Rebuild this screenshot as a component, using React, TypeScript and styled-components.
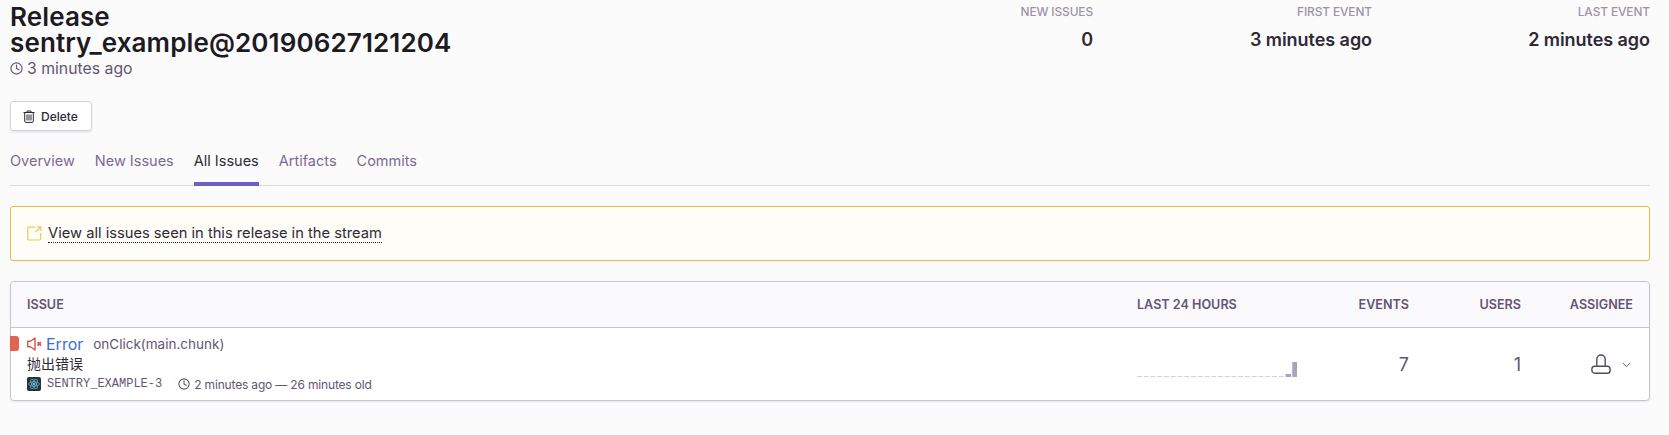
import styled, { createGlobalStyle } from "styled-components";

const GlobalStyle = createGlobalStyle`
  html, body {
    margin: 0;
    padding: 0;
    background: #fbfbfc;
  }

  body {
    font-family: Inter, "Noto Sans CJK SC", sans-serif;
    color: #2f2936;
  }
`;

const Page = styled.div`
  height: 435px;
  overflow: hidden;
  padding: 4px 19px 0 10px;
  box-sizing: border-box;
`;

const Header = styled.div`
  display: grid;
  grid-template-columns: 1fr 278px 279px 278px;
`;

const Title = styled.h1`
  margin: 0;
  font-size: 26px;
  line-height: 26px;
  font-weight: 600;
  letter-spacing: 0.12px;
  color: #1d1a22;
`;

const Since = styled.div`
  display: flex;
  align-items: center;
  gap: 4px;
  margin-top: 1px;
  height: 22px;
  font-size: 15.8px;
  color: #645574;
`;

const Stat = styled.div`
  text-align: right;
`;

const StatLabel = styled.div`
  margin-top: 1px;
  font-size: 11.9px;
  line-height: 14px;
  font-weight: 500;
  letter-spacing: -0.1px;
  color: #9d93a8;
`;

const StatValue = styled.div`
  margin-top: 11px;
  font-size: 18px;
  line-height: 20px;
  font-weight: 600;
  letter-spacing: -0.05px;
  color: #2f2936;
`;

const DeleteButton = styled.button`
  display: flex;
  align-items: center;
  gap: 6px;
  width: 82px;
  height: 30px;
  margin-top: 22px;
  padding: 0 0 0 12px;
  box-sizing: border-box;
  background: #fff;
  border: 1px solid #d5d0db;
  border-radius: 3px;
  box-shadow: 0 2px 2px rgba(47, 41, 54, 0.08);
  font-family: inherit;
  font-size: 12px;
  font-weight: 500;
  color: #2f2936;
`;

const Tabs = styled.div`
  display: flex;
  gap: 20px;
  height: 55px;
  box-sizing: border-box;
  border-bottom: 1px solid #dcd8e0;
`;

const Tab = styled.div<{ $active?: boolean }>`
  height: 55px;
  box-sizing: border-box;
  padding-top: 21px;
  font-size: 14.5px;
  line-height: 18px;
  color: ${(p) => (p.$active ? "#2f2936" : "#7c6a8e")};
  border-bottom: ${(p) => (p.$active ? "4px solid #6c5fc7" : "none")};
`;

const Alert = styled.div`
  display: flex;
  align-items: center;
  gap: 6px;
  height: 55px;
  margin-top: 20px;
  padding-left: 16px;
  box-sizing: border-box;
  background: #fffdf7;
  border: 1px solid #e4bd4c;
  border-radius: 3px;
  box-shadow: 0 1px 1px rgba(47, 41, 54, 0.06);
`;

const AlertLink = styled.span`
  font-size: 14.7px;
  line-height: 18px;
  color: #2f2936;
  border-bottom: 1px dotted #2f2936;
`;

const Table = styled.div`
  margin-top: 20px;
  background: #fff;
  border: 1px solid #c9c3d1;
  border-radius: 4px;
  box-shadow: 0 1px 2px rgba(47, 41, 54, 0.1);
`;

const Columns = styled.div`
  display: grid;
  grid-template-columns: 1fr 160px 112px 112px 112px;
  padding-right: 16px;
`;

const HeadRow = styled(Columns)`
  height: 45px;
  align-items: center;
  background: #fafafd;
  border-bottom: 1px solid #c9c3d1;
  border-radius: 4px 4px 0 0;
  font-size: 12.6px;
  font-weight: 600;
  color: #645574;
`;

const HeadIssue = styled.div`
  padding-left: 16px;
`;

const HeadRight = styled.div`
  text-align: right;
`;

const BodyRow = styled(Columns)`
  position: relative;
  height: 72px;
`;

const Level = styled.div`
  position: absolute;
  left: -1px;
  top: 8px;
  width: 9px;
  height: 15px;
  background: #e0644f;
  border-radius: 0 3px 3px 0;
`;

const IssueCell = styled.div`
  padding: 6px 0 0 16px;
`;

const IssueTitle = styled.div`
  display: flex;
  align-items: center;
  height: 20px;
`;

const ErrorType = styled.span`
  margin-left: 4px;
  font-size: 16px;
  color: #3b6ecc;
`;

const Culprit = styled.span`
  margin-left: 10px;
  font-size: 13.5px;
  color: #645574;
`;

const Message = styled.div`
  height: 20px;
  font-size: 14px;
  line-height: 20px;
  color: #2f2936;
`;

const Meta = styled.div`
  display: flex;
  align-items: center;
  height: 20px;
`;

const ShortId = styled.span`
  margin-left: 6px;
  font-family: "Liberation Mono", monospace;
  font-size: 12px;
  color: #645574;
`;

const TimeText = styled.span`
  margin-left: 4px;
  font-size: 12px;
  letter-spacing: -0.17px;
  color: #645574;
`;

const ClockGap = styled.span`
  display: flex;
  margin-left: 16px;
`;

const ChartCell = styled.div`
  padding-top: 29px;
`;

const Count = styled.div`
  padding-top: 25px;
  text-align: right;
  font-size: 18px;
  line-height: 24px;
  color: #645574;
`;

const AssigneeCell = styled.div`
  display: flex;
  justify-content: flex-end;
  align-items: flex-start;
  gap: 11px;
  padding: 26px 2px 0 0;
`;

const ChevronWrap = styled.span`
  display: flex;
  margin-top: 8px;
`;

const ClockIcon = ({ size }: { size: number }) => (
  <svg width={size} height={size} viewBox="0 0 14 14" fill="none" stroke="#645574" strokeWidth="1.3">
    <circle cx="7" cy="7" r="6" />
    <path d="M7 3.4V7l2.6 1.4" strokeLinecap="round" />
  </svg>
);

const TrashIcon = () => (
  <svg width="12" height="13" viewBox="0 0 12 13" fill="none" stroke="#2f2936" strokeWidth="1">
    <path d="M0.5 2.5h11M4 2.5V1h4v1.5M1.7 2.5v8.7a1.2 1.2 0 0 0 1.2 1.2h6.2a1.2 1.2 0 0 0 1.2-1.2V2.5M4 4.5v6M6 4.5v6M8 4.5v6" />
  </svg>
);

const OpenIcon = () => (
  <svg width="15" height="15" viewBox="0 0 15 15" fill="none" stroke="#eec95e" strokeWidth="1.2">
    <path d="M8 1.2H1.8a1 1 0 0 0-1 1v10.8a1 1 0 0 0 1 1h10.8a1 1 0 0 0 1-1V7" />
    <path d="M9.6 0.8h4.2v4.2M13.6 1L8.6 6" />
  </svg>
);

const MutedIcon = () => (
  <svg width="15" height="14" viewBox="0 0 15 14" fill="none" stroke="#d9534a" strokeWidth="1.4">
    <path d="M0.8 4.2h2.6L8 1v12L3.4 9.8H0.8z" strokeLinejoin="round" />
    <path d="M10.6 5.2l3.4 3.4M14 5.2l-3.4 3.4" strokeWidth="1.7" />
  </svg>
);

const ReactBadge = () => (
  <svg width="14" height="14" viewBox="0 0 14 14" fill="none">
    <rect width="14" height="14" rx="2" fill="#2a2f38" />
    <circle cx="7" cy="7" r="1.2" fill="#5fc6e0" />
    <g stroke="#5fc6e0" strokeWidth="0.7">
      <ellipse cx="7" cy="7" rx="5.4" ry="2.1" />
      <ellipse cx="7" cy="7" rx="5.4" ry="2.1" transform="rotate(60 7 7)" />
      <ellipse cx="7" cy="7" rx="5.4" ry="2.1" transform="rotate(120 7 7)" />
    </g>
  </svg>
);

const UserIcon = () => (
  <svg width="20" height="20" viewBox="0 0 20 20" fill="none" stroke="#564a63" strokeWidth="1.4">
    <path d="M5.8 12.2V5.2a4.2 4.2 0 0 1 8.4 0v7" />
    <rect x="0.9" y="12.2" width="18.2" height="7" rx="2.8" />
  </svg>
);

const ChevronIcon = () => (
  <svg width="9" height="6" viewBox="0 0 9 6" fill="none" stroke="#645574" strokeWidth="1">
    <path d="M0.8 1l3.7 3.6L8.2 1" />
  </svg>
);

const buckets = Array.from({ length: 24 }, (_, i) => (i === 23 ? 15 : i === 22 ? 3 : 1));

const Sparkline = () => (
  <svg width="160" height="20" viewBox="0 0 160 20">
    {buckets.map((h, i) => (
      <rect
        key={i}
        x={i * 6.75}
        y={20 - h}
        width={i > 21 ? 5.5 : 5}
        height={h}
        fill={h > 1 ? "#ada3b9" : "#d6d0dc"}
      />
    ))}
  </svg>
);

const stats = [
  { label: "NEW ISSUES", value: "0" },
  { label: "FIRST EVENT", value: "3 minutes ago" },
  { label: "LAST EVENT", value: "2 minutes ago" },
];

const tabs = ["Overview", "New Issues", "All Issues", "Artifacts", "Commits"];

const App = () => {
  return (
    <Page>
      <GlobalStyle />
      <Header>
        <div>
          <Title>
            Release
            <br />
            sentry_example@20190627121204
          </Title>
          <Since>
            <ClockIcon size={13} />3 minutes ago
          </Since>
        </div>
        {stats.map((s) => (
          <Stat key={s.label}>
            <StatLabel>{s.label}</StatLabel>
            <StatValue>{s.value}</StatValue>
          </Stat>
        ))}
      </Header>
      <DeleteButton>
        <TrashIcon />
        Delete
      </DeleteButton>
      <Tabs>
        {tabs.map((t) => (
          <Tab key={t} $active={t === "All Issues"}>
            {t}
          </Tab>
        ))}
      </Tabs>
      <Alert>
        <OpenIcon />
        <AlertLink>View all issues seen in this release in the stream</AlertLink>
      </Alert>
      <Table>
        <HeadRow>
          <HeadIssue>ISSUE</HeadIssue>
          <div>LAST 24 HOURS</div>
          <HeadRight>EVENTS</HeadRight>
          <HeadRight>USERS</HeadRight>
          <HeadRight>ASSIGNEE</HeadRight>
        </HeadRow>
        <BodyRow>
          <Level />
          <IssueCell>
            <IssueTitle>
              <MutedIcon />
              <ErrorType>Error</ErrorType>
              <Culprit>onClick(main.chunk)</Culprit>
            </IssueTitle>
            <Message>抛出错误</Message>
            <Meta>
              <ReactBadge />
              <ShortId>SENTRY_EXAMPLE-3</ShortId>
              <ClockGap>
                <ClockIcon size={12} />
              </ClockGap>
              <TimeText>2 minutes ago — 26 minutes old</TimeText>
            </Meta>
          </IssueCell>
          <ChartCell>
            <Sparkline />
          </ChartCell>
          <Count>7</Count>
          <Count>1</Count>
          <AssigneeCell>
            <UserIcon />
            <ChevronWrap>
              <ChevronIcon />
            </ChevronWrap>
          </AssigneeCell>
        </BodyRow>
      </Table>
    </Page>
  );
};

export default App;
